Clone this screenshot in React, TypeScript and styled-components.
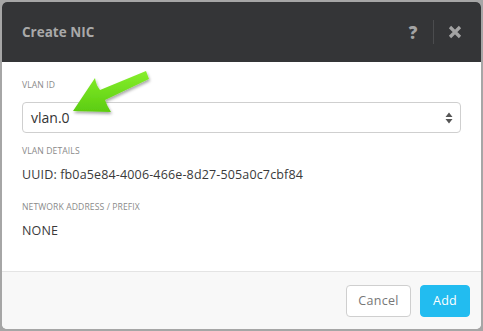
import React from "react";
import styled, { createGlobalStyle } from "styled-components";

const GlobalStyle = createGlobalStyle`
  html, body {
    margin: 0;
    padding: 0;
    width: 483px;
    height: 331px;
    overflow: hidden;
    background: #a6a6a6;
    font-family: "Open Sans", "Liberation Sans", sans-serif;
  }
`;

const Backdrop = styled.div`
  position: relative;
  width: 483px;
  height: 331px;
  padding: 2px 2px 2px 2px;
  box-sizing: border-box;
  display: flex;
`;

const Modal = styled.div`
  flex: 1;
  display: flex;
  flex-direction: column;
  border-radius: 5px;
  overflow: hidden;
  background: #fff;
`;

const Header = styled.div`
  height: 60px;
  background: #343537;
  display: flex;
  align-items: center;
  padding: 0 14px 0 20px;
`;

const Title = styled.div`
  flex: 1;
  color: #a9a9a9;
  font-size: 13.5px;
  font-weight: 700;
`;

const HeaderIcon = styled.div`
  color: #a3a3a3;
  font-size: 17px;
  font-weight: 800;
  width: 24px;
  text-align: center;
`;

const Divider = styled.div`
  width: 1px;
  height: 24px;
  background: #4b4c4e;
  margin: 0 9px 0 8px;
`;

const Body = styled.div`
  flex: 1;
  padding: 18px 20px 0 20px;
  display: flex;
  flex-direction: column;
`;

const Label = styled.div<{ $top?: number }>`
  font-size: 8.6px;
  color: #8a8a8a;
  text-transform: uppercase;
  letter-spacing: 0.1px;
  line-height: 11px;
  margin-top: ${(p) => p.$top ?? 0}px;
`;

const Select = styled.div`
  margin-top: 11px;
  height: 29px;
  border: 1px solid #cfcfcf;
  border-radius: 4px;
  display: flex;
  align-items: center;
  padding: 0 7px 0 8px;
  font-size: 14px;
  color: #333;
`;

const SelectText = styled.span`
  flex: 1;
`;

const Value = styled.div`
  font-size: 12.5px;
  color: #3a3a3a;
  letter-spacing: 0.15px;
  margin-top: 10px;
  margin-bottom: 20px;
  line-height: 15px;
`;

const Footer = styled.div`
  height: 57px;
  background: #f8f8f8;
  border-top: 1px solid #e4e4e4;
  display: flex;
  justify-content: flex-end;
  align-items: center;
  gap: 9px;
  padding: 0 11px 0 0;
`;

const Button = styled.button<{ $primary?: boolean }>`
  height: 32px;
  border-radius: 4px;
  font-family: inherit;
  font-size: 12.5px;
  letter-spacing: 0.3px;
  padding: 0;
  border: 1px solid ${(p) => (p.$primary ? "#22bcf0" : "#cfcfcf")};
  background: ${(p) => (p.$primary ? "#22bcf0" : "#fff")};
  color: ${(p) => (p.$primary ? "#fff" : "#777")};
  width: ${(p) => (p.$primary ? 50 : 65)}px;
`;

const ArrowSvg = styled.svg`
  position: absolute;
  left: 0;
  top: 0;
  pointer-events: none;
`;

export default function App() {
  return (
    <>
      <GlobalStyle />
      <Backdrop>
        <Modal>
          <Header>
            <Title>Create NIC</Title>
            <HeaderIcon>?</HeaderIcon>
            <Divider />
            <HeaderIcon>
              <svg width="14" height="14" viewBox="0 0 14 14">
                <path d="M2 2 L12 12 M12 2 L2 12" stroke="#a3a3a3" strokeWidth="3.2" />
              </svg>
            </HeaderIcon>
          </Header>
          <Body>
            <Label>VLAN ID</Label>
            <Select>
              <SelectText>vlan.0</SelectText>
              <svg width="8" height="12" viewBox="0 0 8 12">
                <path d="M4 0.5 L7.5 5 L0.5 5 Z M4 11.5 L7.5 7 L0.5 7 Z" fill="#555" />
              </svg>
            </Select>
            <Label $top={13}>VLAN Details</Label>
            <Value>UUID: fb0a5e84-4006-466e-8d27-505a0c7cbf84</Value>
            <Label>Network Address / Prefix</Label>
            <Value>NONE</Value>
          </Body>
          <Footer>
            <Button>Cancel</Button>
            <Button $primary>Add</Button>
          </Footer>
        </Modal>
        <ArrowSvg width="483" height="331" viewBox="0 0 483 331">
          <defs>
            <linearGradient id="ag" x1="0" y1="0" x2="0" y2="1">
              <stop offset="0" stopColor="#86ef2c" />
              <stop offset="1" stopColor="#5ccc10" />
            </linearGradient>
            <filter id="sh" x="-20%" y="-20%" width="140%" height="140%">
              <feDropShadow dx="1" dy="2" stdDeviation="1.5" floodColor="#000" floodOpacity="0.35" />
            </filter>
          </defs>
          <path
            d="M73 111 L111 112 Q107 106 105 100 L149 79 L146 71 L100 90 Q96 85 95 78 Z"
            fill="url(#ag)"
            filter="url(#sh)"
          />
        </ArrowSvg>
      </Backdrop>
    </>
  );
}
